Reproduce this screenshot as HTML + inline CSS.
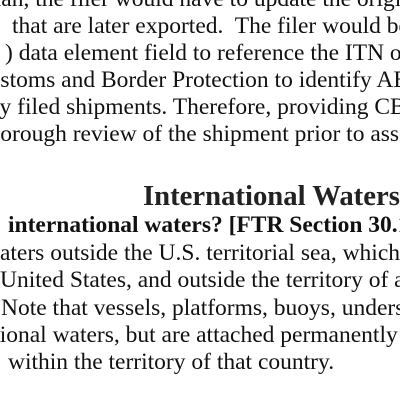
<!DOCTYPE html>
<html><head><style>
html,body{margin:0;padding:0;width:400px;height:400px;overflow:hidden;background:#fff;}
#w{position:relative;width:400px;height:400px;overflow:hidden;}
.l{position:absolute;white-space:nowrap;font-family:"Liberation Serif",serif;font-size:23.5px;line-height:27px;color:#111;}
.b{font-weight:bold;}
.h{font-weight:bold;font-size:28.7px;color:#222;}
</style></head><body><div id="w">
<div class="l" style="left:-17px;top:-14px">plan, the filer would have to update the original</div>
<div class="l" style="left:12px;top:13px">that are later exported.&nbsp; The filer would be</div>
<div class="l" style="left:5px;top:40px">) data element field to reference the ITN of</div>
<div class="l" style="left:-27px;top:67px">Customs and Border Protection to identify AES</div>
<div class="l" style="left:-7px;top:94px">ly filed shipments. Therefore, providing CBP</div>
<div class="l" style="left:-18px;top:121px">thorough review of the shipment prior to assess</div>
<div class="l h" style="left:143px;top:183px">International Waters</div>
<div class="l b" style="left:8px;top:212px">international waters? [FTR Section 30.1</div>
<div class="l" style="left:-17px;top:240px">waters outside the U.S. territorial sea, which</div>
<div class="l" style="left:0px;top:267px">United States, and outside the territory of a</div>
<div class="l" style="left:1px;top:295px">Note that vessels, platforms, buoys, undersea</div>
<div class="l" style="left:-29px;top:322px">national waters, but are attached permanently</div>
<div class="l" style="left:8px;top:349px">within the territory of that country.</div>
</div></body></html>
